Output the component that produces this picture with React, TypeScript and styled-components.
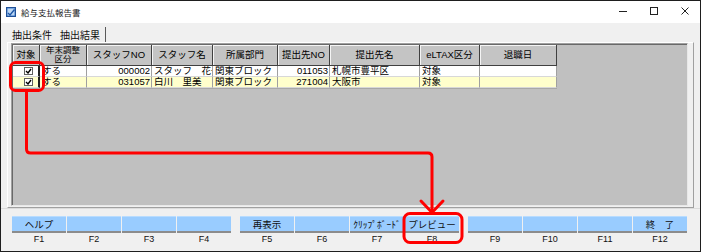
import React from "react";
import styled, { createGlobalStyle } from "styled-components";

const Global = createGlobalStyle`
  html, body { margin: 0; padding: 0; background: #ffffff; }
  body { font-family: "Liberation Sans", "Noto Sans CJK JP", sans-serif; }
`;

const FONT = `"Liberation Sans", "Noto Sans CJK JP", sans-serif`;
const JP = `"Noto Sans CJK JP", sans-serif`;

const Window = styled.div`
  position: relative;
  width: 701px;
  height: 252px;
  box-sizing: border-box;
  border: 1px solid #1e1e1e;
  background: #f0f0f0;
  display: flex;
  flex-direction: column;
  overflow: hidden;
  font-family: ${FONT};
  color: #000;
`;

const TitleBar = styled.div`
  height: 22px;
  flex-shrink: 0;
  background: #ffffff;
  display: flex;
  align-items: center;
`;

const AppIcon = styled.svg`
  margin-left: 5px;
  width: 10px;
  height: 10px;
  margin-top: -1px;
`;

const Title = styled.span`
  margin-left: 5px;
  font-family: ${JP};
  font-size: 8.5px;
  line-height: 10px;
  color: #222;
`;

const Controls = styled.div`
  margin-left: auto;
  display: flex;
  height: 100%;
  align-items: center;
  padding-bottom: 3px;
  box-sizing: border-box;
`;

const Ctrl = styled.div`
  width: 31px;
  display: flex;
  align-items: center;
  justify-content: center;
`;

const TabStrip = styled.div`
  height: 19px;
  flex-shrink: 0;
  display: flex;
  align-items: flex-end;
  padding-left: 6px;
`;

const Tab = styled.div<{ $active?: boolean }>`
  height: 15px;
  box-sizing: border-box;
  padding: ${(p) => (p.$active ? "0 5px 0 5px" : "0 3px 0 5px")};
  font-family: ${JP};
  font-size: 10px;
  line-height: 14px;
  display: flex;
  align-items: center;
  border-right: ${(p) => (p.$active ? "1px solid #5a5a5a" : "none")};
  color: #111;
`;

const TabPage = styled.div`
  height: 166px;
  flex-shrink: 0;
  margin: 0 6px;
  box-sizing: border-box;
  border-top: 1px solid #ffffff;
  border-left: 1px solid #ffffff;
  border-right: 1px solid #a0a0a0;
  border-bottom: 1px solid #a0a0a0;
  padding: 0 5px 1px 3px;
`;

const Grid = styled.div`
  height: 163px;
  box-sizing: border-box;
  background: #c0c0c0;
  border-top: 1px solid #a0a0a0;
  border-left: 1px solid #a0a0a0;
  border-right: 1px solid #e8e8e8;
  border-bottom: 1px solid #e8e8e8;
  box-shadow: inset 1px 1px 0 #696969;
  padding: 1px 0 0 1px;
`;

const COLS = "27px 47px 65px 61px 65px 52px 90px 60px 77px";

const HeaderRow = styled.div`
  display: grid;
  grid-template-columns: ${COLS};
  width: 544px;
  height: 21px;
`;

const HeaderCell = styled.div`
  box-sizing: border-box;
  background: #c4c4c4;
  border-right: 1px solid #404040;
  border-bottom: 1px solid #404040;
  box-shadow: inset 1px 1px 0 #f4f4f4;
  display: flex;
  flex-direction: column;
  align-items: center;
  justify-content: center;
  font-family: ${FONT};
  font-size: 9.5px;
  line-height: 10px;
  white-space: nowrap;
  overflow: hidden;
`;

const HeaderTwoLine = styled.span`
  font-size: 8.5px;
  line-height: 9px;
  text-align: center;
`;

const DataRow = styled.div<{ $alt?: boolean }>`
  display: grid;
  grid-template-columns: ${COLS};
  width: 544px;
  height: 11px;
  background: ${(p) => (p.$alt ? "#ffffcc" : "#ffffff")};
  box-shadow: ${(p) => (p.$alt ? "0 1px 0 #a8a8a8" : "none")};
`;

const Cell = styled.div<{ $align?: "left" | "right" | "center"; $first?: boolean }>`
  box-sizing: border-box;
  height: 11px;
  border-right: ${(p) => (p.$first ? "2px solid #202020" : "1px solid #a0a0a0")};
  border-bottom: 1px solid #d8d8d8;
  padding: 0 1px 0 2px;
  font-size: 9.5px;
  line-height: 10px;
  white-space: nowrap;
  overflow: hidden;
  text-align: ${(p) => p.$align ?? "left"};
  display: flex;
  align-items: center;
  justify-content: ${(p) =>
    p.$align === "right" ? "flex-end" : p.$align === "center" ? "center" : "flex-start"};
`;

const CheckBox = styled.span`
  width: 9px;
  height: 8px;
  box-sizing: border-box;
  border: 1px solid #606060;
  background: #ffffff;
  display: flex;
  align-items: center;
  justify-content: center;
  margin-left: 5px;
`;

const FnBar = styled.div`
  flex: 1;
  border-top: 1px solid #dcdcdc;
  padding: 7px 0 0 11px;
  display: flex;
  gap: 8px;
`;

const FnGroup = styled.div`
  display: flex;
`;

const FnKey = styled.div`
  width: 55px;
  display: flex;
  flex-direction: column;
  align-items: stretch;
`;

const FnButton = styled.div`
  height: 17px;
  margin-right: 1px;
  box-sizing: border-box;
  background: #99ccff;
  border-top: 1px solid #b8dcff;
  border-bottom: 2px solid #8c8c8c;
  display: flex;
  align-items: center;
  justify-content: center;
  font-family: ${JP};
  font-size: 9.5px;
  line-height: 10px;
  white-space: nowrap;
  color: #111;
`;

const FnLabel = styled.div`
  margin-top: 1px;
  text-align: center;
  font-size: 9px;
  line-height: 10px;
  margin-right: 1px;
  color: #111;
`;

const Overlay = styled.svg`
  position: absolute;
  left: -1px;
  top: -1px;
  width: 701px;
  height: 252px;
  pointer-events: none;
`;

const columns = ["対象", "年末調整\n区分", "スタッフNO", "スタッフ名", "所属部門", "提出先NO", "提出先名", "eLTAX区分", "退職日"];

const rows = [
  ["", "する", "000002", "スタッフ　花子", "関東ブロック", "011053", "札幌市豊平区", "対象", ""],
  ["", "する", "031057", "白川　里美", "関東ブロック", "271004", "大阪市", "対象", ""],
];

const align: ("left" | "right" | "center")[] = ["center", "left", "right", "left", "left", "right", "left", "left", "left"];

const fnKeys = [
  ["ヘルプ", "", "", ""],
  ["再表示", "", "ｸﾘｯﾌﾟﾎﾞｰﾄﾞ", "プレビュー"],
  ["", "", "", "終　了"],
];

const Check = () => (
  <svg width="7" height="6" viewBox="0 0 7 6">
    <path d="M1 3 L3 5 L6 1" fill="none" stroke="#000" strokeWidth="1.4" />
  </svg>
);

export default function App() {
  return (
    <>
      <Global />
      <Window>
        <TitleBar>
          <AppIcon viewBox="0 0 10 10">
            <rect x="0.5" y="0.5" width="9" height="9" fill="#3a78c8" stroke="#1f4f96" />
            <rect x="1.5" y="1.5" width="7" height="7" fill="#bcd6f2" />
            <path d="M2 6 L4 8 L8.5 2.5" fill="none" stroke="#1d56a6" strokeWidth="1.4" />
          </AppIcon>
          <Title>給与支払報告書</Title>
          <Controls>
            <Ctrl>
              <svg width="10" height="10" viewBox="0 0 10 10">
                <path d="M1 5.5 H9" stroke="#222" strokeWidth="1" />
              </svg>
            </Ctrl>
            <Ctrl>
              <svg width="10" height="10" viewBox="0 0 10 10">
                <rect x="1.5" y="1.5" width="7" height="7" fill="none" stroke="#222" strokeWidth="1" />
              </svg>
            </Ctrl>
            <Ctrl>
              <svg width="10" height="10" viewBox="0 0 10 10">
                <path d="M1.5 1.5 L8.5 8.5 M8.5 1.5 L1.5 8.5" stroke="#222" strokeWidth="1" />
              </svg>
            </Ctrl>
          </Controls>
        </TitleBar>

        <TabStrip>
          <Tab>抽出条件</Tab>
          <Tab $active>抽出結果</Tab>
        </TabStrip>

        <TabPage>
          <Grid>
            <HeaderRow>
              {columns.map((c) => (
                <HeaderCell key={c}>
                  {c.includes("\n") ? (
                    c.split("\n").map((l) => <HeaderTwoLine key={l}>{l}</HeaderTwoLine>)
                  ) : (
                    c
                  )}
                </HeaderCell>
              ))}
            </HeaderRow>
            {rows.map((r, ri) => (
              <DataRow key={ri} $alt={ri === 1}>
                {r.map((v, ci) => (
                  <Cell key={ci} $align={align[ci]} $first={ci === 0}>
                    {ci === 0 ? (
                      <CheckBox>
                        <Check />
                      </CheckBox>
                    ) : (
                      v
                    )}
                  </Cell>
                ))}
              </DataRow>
            ))}
          </Grid>
        </TabPage>

        <FnBar>
          {fnKeys.map((g, gi) => (
            <FnGroup key={gi}>
              {g.map((label, ki) => (
                <FnKey key={ki}>
                  <FnButton>{label}</FnButton>
                  <FnLabel>F{gi * 4 + ki + 1}</FnLabel>
                </FnKey>
              ))}
            </FnGroup>
          ))}
        </FnBar>

        <Overlay viewBox="0 0 701 252">
          <g fill="none" stroke="#ff0000" strokeWidth="3" strokeLinecap="round" strokeLinejoin="round">
            <rect x="10.5" y="62.5" width="33" height="28" rx="5" />
            <path d="M26.5 91 V149 Q26.5 153 30.5 153 H428 Q432 153 432 157 V212" />
            <path d="M421 201 L432 212.5 L443 201" />
            <rect x="404" y="213.5" width="58" height="29" rx="6" />
          </g>
        </Overlay>
      </Window>
    </>
  );
}
